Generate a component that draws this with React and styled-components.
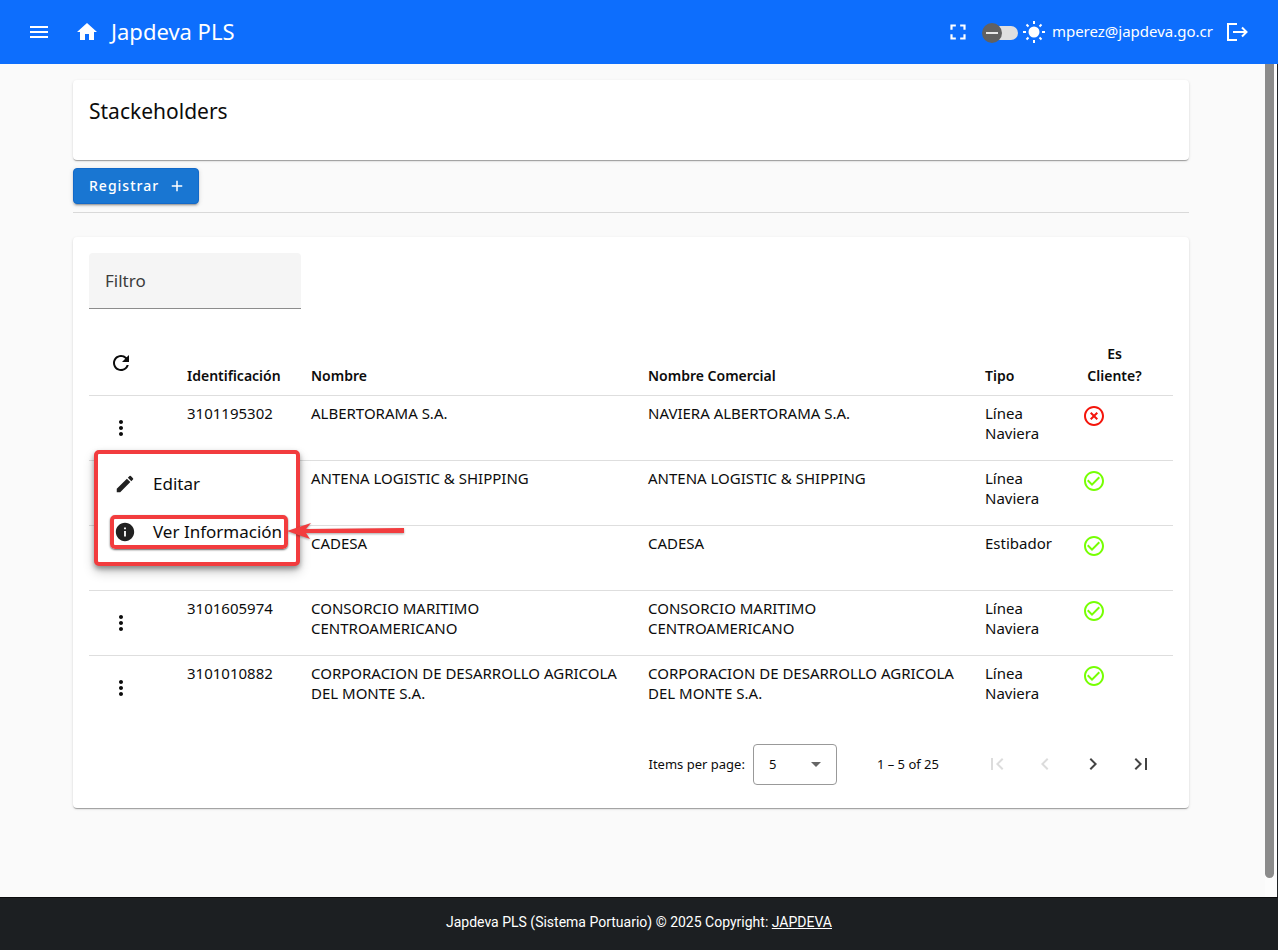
import React from "react";
import styled, { createGlobalStyle } from "styled-components";
import {
  MdMenu,
  MdHome,
  MdFullscreen,
  MdAdd,
  MdRefresh,
  MdMoreVert,
  MdEdit,
  MdInfo,
  MdCheckCircleOutline,
  MdHighlightOff,
  MdFirstPage,
  MdChevronLeft,
  MdChevronRight,
  MdLastPage,
  MdArrowDropDown,
} from "react-icons/md";

const GlobalStyle = createGlobalStyle`
  *, *::before, *::after { box-sizing: border-box; }
  html, body { margin: 0; padding: 0; }
  body {
    background: #fafafa;
    color: #0c0c0c;
    font-family: "Noto Sans", "Open Sans", sans-serif;
    font-size: 15px;
    line-height: 20px;
  }
  button, input, select { font: inherit; color: inherit; }
`;

const Page = styled.div`
  display: flex;
  flex-direction: column;
  height: 100vh;
`;

const Toolbar = styled.header`
  display: flex;
  flex: none;
  align-items: center;
  height: 64px;
  padding: 0 17px 0 15px;
  background: #0d6efd;
  color: #fff;
`;

const IconButton = styled.button`
  display: inline-flex;
  flex: none;
  align-items: center;
  justify-content: center;
  width: ${(p) => p.$size || 48}px;
  height: ${(p) => p.$size || 48}px;
  padding: 0;
  border: 0;
  border-radius: 50%;
  background: none;
  color: inherit;
  cursor: pointer;

  &:disabled {
    color: #dcdcdc;
    cursor: default;
  }
`;

const Brand = styled.a`
  padding-bottom: 2px;
  color: inherit;
  font-size: 22px;
  line-height: 32px;
  text-decoration: none;
`;

const Account = styled.div`
  display: flex;
  align-items: center;
  margin-left: auto;
`;

const ThemeSwitch = styled.label`
  display: flex;
  align-items: center;
  margin-left: 4px;
`;

const SwitchInput = styled.input`
  appearance: none;
  display: flex;
  align-items: center;
  width: 32px;
  height: 14px;
  margin: 2px 4px 0;
  border-radius: 7px;
  background: #e0e0e0;
  cursor: pointer;

  &::before {
    content: "";
    flex: none;
    width: 20px;
    height: 20px;
    margin-left: -4px;
    border-radius: 50%;
    background: linear-gradient(#e8e8e8, #e8e8e8) center / 12px 2px no-repeat #616161;
  }
`;

const Email = styled.span`
  margin-left: 6px;
  padding-bottom: 2px;
`;

const Body = styled.div`
  display: flex;
  flex: 1;
  min-height: 0;
`;

const Main = styled.main`
  flex: 1;
  min-width: 0;
  padding: 16px 76px 0 73px;
  overflow: hidden;
`;

const ScrollRail = styled.div`
  flex: none;
  width: 13px;
  padding: 0 3px 19px 0;
  background: #fcfcfc;
  border-right: 1px solid #202326;
`;

const ScrollThumb = styled.div`
  height: 100%;
  border-radius: 0 0 5px 5px;
  background: #8b8b8b;
`;

const Card = styled.section`
  border-radius: 4px;
  background: #fff;
  box-shadow: 0 2px 1px -1px rgba(0, 0, 0, 0.2), 0 1px 1px rgba(0, 0, 0, 0.14),
    0 1px 3px rgba(0, 0, 0, 0.12);
`;

const TitleCard = styled(Card)`
  height: 80px;
  padding: 15px 16px;
`;

const Title = styled.h1`
  margin: 0;
  font-size: 21px;
  font-weight: 400;
  line-height: 32px;
`;

const PrimaryButton = styled.button`
  display: flex;
  align-items: center;
  gap: 9px;
  height: 36px;
  margin: 8px 0;
  padding: 0 12px 0 15px;
  border: 1px solid #1269c9;
  border-radius: 4px;
  background: #1976d2;
  color: #fff;
  font-size: 14px;
  font-weight: 500;
  letter-spacing: 1px;
  box-shadow: 0 3px 1px -2px rgba(0, 0, 0, 0.2), 0 2px 2px rgba(0, 0, 0, 0.14),
    0 1px 5px rgba(0, 0, 0, 0.12);
  cursor: pointer;
`;

const Divider = styled.hr`
  margin: 0 0 24px;
  border: 0;
  border-top: 1px solid #d9d9d9;
`;

const TableCard = styled(Card)`
  padding: 16px;
`;

const FilterInput = styled.input`
  display: block;
  width: 212px;
  height: 56px;
  padding: 0 16px;
  border: 0;
  border-bottom: 1px solid #8c8c8c;
  border-radius: 4px 4px 0 0;
  background: #f5f5f5;
  font-size: 17px;

  &::placeholder {
    color: #3c3c3c;
    opacity: 1;
  }
`;

const Table = styled.table`
  width: 100%;
  margin-top: 21px;
  border-collapse: collapse;
  table-layout: fixed;
`;

const Col = styled.col`
  width: ${(p) => p.$width};
`;

const HeadCell = styled.th`
  height: 65px;
  padding: ${(p) => (p.$icon ? "0 8px 8px" : p.$center ? "0 18px 8px 8px" : "0 8px 8px 16px")};
  border-bottom: 1px solid #dedede;
  font-size: 14px;
  font-weight: 600;
  line-height: 22px;
  text-align: ${(p) => (p.$center ? "center" : "left")};
  vertical-align: bottom;
`;

const Cell = styled.td`
  position: relative;
  height: 65px;
  padding: ${(p) => (p.$icon ? "8px" : "7px 8px 8px 16px")};
  vertical-align: top;

  tr:not(:last-child) > & {
    border-bottom: 1px solid #dedede;
  }
`;

const Status = styled.span`
  display: block;
  height: 24px;
  margin-top: 1px;
  color: ${(p) => (p.$ok ? "#76ff03" : "#f4150b")};
`;

const Menu = styled.div`
  position: absolute;
  z-index: 1;
  top: 54px;
  left: 5px;
  display: flex;
  flex-direction: column;
  gap: 14px;
  width: 206px;
  padding: 13px 8px 13px 12px;
  border: 4px solid #f23c3e;
  border-radius: 5px;
  background: #fff;
  box-shadow: 0 3px 5px rgba(0, 0, 0, 0.35), 0 6px 12px rgba(0, 0, 0, 0.2);
`;

const MenuItem = styled.button`
  display: flex;
  align-items: center;
  gap: 17px;
  width: 178px;
  height: 34px;
  padding: 0;
  border: 4px solid ${(p) => (p.$marked ? "#f23c3e" : "transparent")};
  border-radius: 5px;
  background: none;
  box-shadow: ${(p) => (p.$marked ? "0 1px 2px rgba(0, 0, 0, 0.6)" : "none")};
  font-size: 17px;
  line-height: 24px;
  white-space: nowrap;
  cursor: pointer;

  svg {
    flex: none;
    color: #212121;
  }
`;

const Arrow = styled.svg`
  position: absolute;
  z-index: 2;
  top: 125px;
  left: 196px;
  filter: drop-shadow(0 1px 1px rgba(0, 0, 0, 0.35));
`;

const Paginator = styled.nav`
  display: flex;
  align-items: center;
  justify-content: flex-end;
  height: 56px;
  margin-top: 16px;
  padding-right: 8px;
  font-size: 13px;

  button:not(:disabled) {
    color: #444;
  }
`;

const SizeLabel = styled.label`
  display: flex;
  align-items: center;
  gap: 8px;
`;

const SelectBox = styled.span`
  display: grid;
  align-items: center;
  width: 84px;

  > * {
    grid-area: 1 / 1;
  }

  svg {
    justify-self: end;
    margin-right: 9px;
    color: #666;
    pointer-events: none;
  }
`;

const Select = styled.select`
  appearance: none;
  height: 41px;
  padding: 0 15px;
  border: 1px solid #999;
  border-radius: 4px;
  background: #fff;
`;

const Range = styled.span`
  margin: 0 34px 0 40px;
`;

const Footer = styled.footer`
  flex: none;
  height: 53px;
  padding: 14px 16px;
  background: #1c1f22;
  border-top: 1px solid #0b0c0d;
  color: #fff;
  font-family: Roboto, sans-serif;
  font-size: 14px;
  text-align: center;
`;

const FooterLink = styled.a`
  color: inherit;
`;

const rows = [
  { id: "3101195302", name: "ALBERTORAMA S.A.", trade: "NAVIERA ALBERTORAMA S.A.", type: "Línea Naviera", client: false },
  { id: "", name: "ANTENA LOGISTIC & SHIPPING", trade: "ANTENA LOGISTIC & SHIPPING", type: "Línea Naviera", client: true },
  { id: "", name: "CADESA", trade: "CADESA", type: "Estibador", client: true },
  { id: "3101605974", name: "CONSORCIO MARITIMO CENTROAMERICANO", trade: "CONSORCIO MARITIMO CENTROAMERICANO", type: "Línea Naviera", client: true },
  { id: "3101010882", name: "CORPORACION DE DESARROLLO AGRICOLA DEL MONTE S.A.", trade: "CORPORACION DE DESARROLLO AGRICOLA DEL MONTE S.A.", type: "Línea Naviera", client: true },
];

function SunIcon() {
  return (
    <svg width="24" height="24" viewBox="0 0 24 24" fill="none" stroke="currentColor" strokeWidth="2" aria-hidden="true">
      <circle cx="12" cy="12" r="5.500" fill="currentColor" stroke="none" />
      <path d="M12 1v3M12 20v3M1 12h3M20 12h3M4.500 4.500l2 2M17.500 17.500l2 2M4.500 19.500l2-2M17.500 6.500l2-2" />
    </svg>
  );
}

function ExitIcon() {
  return (
    <svg width="24" height="24" viewBox="0 0 24 24" fill="none" stroke="currentColor" strokeWidth="2" aria-hidden="true">
      <path d="M12 4H3v16h9M8 12h13M17 7.500l4.500 4.500-4.500 4.500" />
    </svg>
  );
}

function RowMenu() {
  return (
    <>
      <Menu role="menu">
        <MenuItem role="menuitem">
          <MdEdit size={22} />
          Editar
        </MenuItem>
        <MenuItem role="menuitem" $marked>
          <MdInfo size={22} />
          Ver Información
        </MenuItem>
      </Menu>
      <Arrow width="122" height="20" viewBox="0 0 122 20" aria-hidden="true">
        <path d="M2 10 L26 2 L21 8 L119 7 V12 L21 12 L25 18 Z" fill="#f23c3e" />
      </Arrow>
    </>
  );
}

export default function App() {
  return (
    <Page>
      <GlobalStyle />
      <Toolbar>
        <IconButton aria-label="Menú"><MdMenu size={24} /></IconButton>
        <IconButton aria-label="Inicio"><MdHome size={24} /></IconButton>
        <Brand href="#">Japdeva PLS</Brand>
        <Account>
          <IconButton $size={40} aria-label="Pantalla completa"><MdFullscreen size={26} /></IconButton>
          <ThemeSwitch>
            <SwitchInput type="checkbox" role="switch" aria-label="Tema oscuro" />
            <SunIcon />
          </ThemeSwitch>
          <Email>mperez@japdeva.go.cr</Email>
          <IconButton aria-label="Salir"><ExitIcon /></IconButton>
        </Account>
      </Toolbar>
      <Body>
        <Main>
          <TitleCard>
            <Title>Stackeholders</Title>
          </TitleCard>
          <PrimaryButton>
            Registrar
            <MdAdd size={18} />
          </PrimaryButton>
          <Divider />
          <TableCard>
            <FilterInput placeholder="Filtro" aria-label="Filtro" />
            <Table>
              <colgroup>
                <Col $width="82px" />
                <Col $width="124px" />
                <Col $width="337px" />
                <Col $width="337px" />
                <Col $width="97px" />
                <Col />
              </colgroup>
              <thead>
                <tr>
                  <HeadCell $icon>
                    <IconButton aria-label="Recargar"><MdRefresh size={24} /></IconButton>
                  </HeadCell>
                  <HeadCell>Identificación</HeadCell>
                  <HeadCell>Nombre</HeadCell>
                  <HeadCell>Nombre Comercial</HeadCell>
                  <HeadCell>Tipo</HeadCell>
                  <HeadCell $center>Es<br />Cliente?</HeadCell>
                </tr>
              </thead>
              <tbody>
                {rows.map((r, i) => (
                  <tr key={r.name}>
                    <Cell $icon>
                      <IconButton aria-label="Opciones"><MdMoreVert size={24} /></IconButton>
                      {i === 0 && <RowMenu />}
                    </Cell>
                    <Cell>{r.id}</Cell>
                    <Cell>{r.name}</Cell>
                    <Cell>{r.trade}</Cell>
                    <Cell>{r.type}</Cell>
                    <Cell>
                      <Status $ok={r.client}>
                        {r.client ? <MdCheckCircleOutline size={24} /> : <MdHighlightOff size={24} />}
                      </Status>
                    </Cell>
                  </tr>
                ))}
              </tbody>
            </Table>
            <Paginator aria-label="Paginación">
              <SizeLabel>
                Items per page:
                <SelectBox>
                  <Select defaultValue="5">
                    <option>5</option>
                    <option>10</option>
                    <option>25</option>
                  </Select>
                  <MdArrowDropDown size={24} />
                </SelectBox>
              </SizeLabel>
              <Range>1 – 5 of 25</Range>
              <IconButton disabled aria-label="Primera página"><MdFirstPage size={24} /></IconButton>
              <IconButton disabled aria-label="Página anterior"><MdChevronLeft size={24} /></IconButton>
              <IconButton aria-label="Página siguiente"><MdChevronRight size={24} /></IconButton>
              <IconButton aria-label="Última página"><MdLastPage size={24} /></IconButton>
            </Paginator>
          </TableCard>
        </Main>
        <ScrollRail>
          <ScrollThumb />
        </ScrollRail>
      </Body>
      <Footer>
        Japdeva PLS (Sistema Portuario) © 2025 Copyright: <FooterLink href="#">JAPDEVA</FooterLink>
      </Footer>
    </Page>
  );
}
